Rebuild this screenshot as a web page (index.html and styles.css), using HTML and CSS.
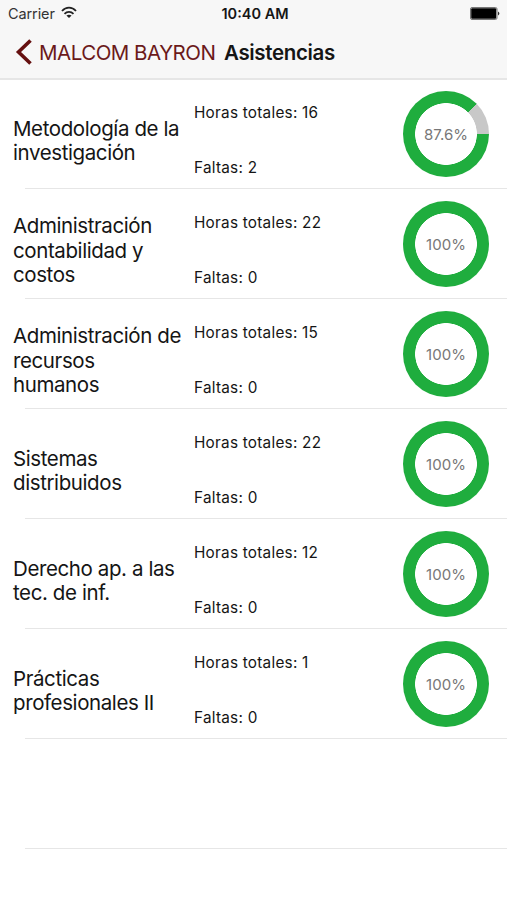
FILE: index.html
```html
<!DOCTYPE html>
<html lang="es">

<head>
    <meta charset="utf-8">
    <meta name="viewport" content="width=device-width">
    <title>Asistencias</title>
    <link rel="stylesheet" href="styles.css">
</head>

<body>
    <header class="header">
        <div class="status-bar">
            <div class="carrier">
                <span>Carrier</span>
                <svg class="wifi" width="16" height="14" viewBox="0 0 16 14">
                    <path d="M1 5C5 .6 11 .6 15 5M3.5 7.800C6 5.200 10 5.200 12.500 7.800" />
                    <path class="wifi-dot" d="M8 12L5.400 9.600C7 8.300 9 8.300 10.600 9.600Z" />
                </svg>
            </div>
            <span class="time">10:40 AM</span>
            <svg class="battery" width="31" height="13" viewBox="0 0 31 13">
                <rect class="battery-case" x=".5" y=".5" width="26.500" height="12" rx="1.500" />
                <rect x="1.200" y="1.200" width="25" height="10.600" rx="1" />
                <path d="M28.200 4.500Q30.500 6.500 28.200 8.500Z" />
            </svg>
        </div>
        <nav class="nav-bar">
            <a class="back">
                <svg width="18" height="26" viewBox="0 0 18 26">
                    <path d="M15.500 1.500L3.500 13L15.500 24.500" />
                </svg>
                <span class="back-text">MALCOM BAYRON</span>
            </a>
            <h1 class="title">Asistencias</h1>
        </nav>
    </header>
    <ul class="list">
        <li class="item">
            <h2 class="name"><span>Metodología de la<br>investigación</span></h2>
            <div class="info">
                <p>Horas totales: 16</p>
                <p>Faltas: 2</p>
            </div>
            <div class="chart partial"><span class="percent">87.6%</span></div>
        </li>
        <li class="item">
            <h2 class="name"><span>Administración<br>contabilidad y<br>costos</span></h2>
            <div class="info">
                <p>Horas totales: 22</p>
                <p>Faltas: 0</p>
            </div>
            <div class="chart"><span class="percent">100%</span></div>
        </li>
        <li class="item">
            <h2 class="name"><span>Administración de<br>recursos<br>humanos</span></h2>
            <div class="info">
                <p>Horas totales: 15</p>
                <p>Faltas: 0</p>
            </div>
            <div class="chart"><span class="percent">100%</span></div>
        </li>
        <li class="item">
            <h2 class="name"><span>Sistemas<br>distribuidos</span></h2>
            <div class="info">
                <p>Horas totales: 22</p>
                <p>Faltas: 0</p>
            </div>
            <div class="chart"><span class="percent">100%</span></div>
        </li>
        <li class="item">
            <h2 class="name"><span>Derecho ap. a las<br>tec. de inf.</span></h2>
            <div class="info">
                <p>Horas totales: 12</p>
                <p>Faltas: 0</p>
            </div>
            <div class="chart"><span class="percent">100%</span></div>
        </li>
        <li class="item">
            <h2 class="name"><span>Prácticas<br>profesionales II</span></h2>
            <div class="info">
                <p>Horas totales: 1</p>
                <p>Faltas: 0</p>
            </div>
            <div class="chart"><span class="percent">100%</span></div>
        </li>
        <li class="item"></li>
    </ul>
</body>

</html>
```
FILE: styles.css
```css
* {
    box-sizing: border-box;
}

body {
    margin: 0;
    height: 900px;
    overflow: hidden;
    background: #fff;
    color: #151515;
    font-family: Inter, "Liberation Sans", sans-serif;
}

h1,
h2,
p,
ul {
    margin: 0;
    padding: 0;
}

.header {
    height: 80px;
    background: #f7f7f7;
    border-bottom: 2px solid #e6e6e6;
}

.status-bar {
    display: grid;
    grid-template-columns: 1fr auto 1fr;
    align-items: center;
    height: 27px;
    padding: 0 6px 0 8px;
}

.carrier {
    display: flex;
    align-items: center;
    gap: 6px;
    font-size: 14.5px;
    letter-spacing: -.1px;
    color: #333;
}

.wifi {
    margin-bottom: 2px;
    fill: none;
    stroke: #222;
    stroke-width: 1.8;
}

.wifi .wifi-dot {
    fill: #222;
    stroke: none;
}

.time {
    padding-left: 1px;
    font-size: 14.5px;
    font-weight: 600;
}

.battery {
    justify-self: end;
    fill: #000;
}

.battery-case {
    fill: none;
    stroke: #777;
}

.nav-bar {
    display: flex;
    align-items: center;
    height: 50px;
    padding-left: 15px;
}

.back {
    display: flex;
    align-items: center;
    width: 209px;
    color: #6b1a1a;
    font-size: 20.5px;
    letter-spacing: -.5px;
    white-space: nowrap;
}

.back svg {
    margin-right: 6px;
    fill: none;
    stroke: #651010;
    stroke-width: 3.6;
}

.title {
    font-size: 20.5px;
    font-weight: 600;
    letter-spacing: -.35px;
}

.list {
    list-style: none;
}

/* the separator starts 25px from the left edge */
.item {
    display: flex;
    height: 110px;
    padding: 0 18px 0 13px;
    background: linear-gradient(#e6e6e6, #e6e6e6) 25px 108px / 100% 1px no-repeat;
}

.name {
    display: flex;
    align-items: center;
    width: 181px;
    padding-top: 12px;
    font-size: 20.5px;
    font-weight: 400;
    line-height: 24.5px;
    letter-spacing: -.4px;
    white-space: nowrap;
}

.info {
    display: flex;
    flex-direction: column;
    gap: 35px;
    padding-top: 23px;
    font-size: 15.3px;
    line-height: 20px;
    letter-spacing: .25px;
}

.chart {
    display: flex;
    align-items: center;
    justify-content: center;
    width: 86px;
    height: 86px;
    margin: 11px 0 0 auto;
    border-radius: 50%;
    background: radial-gradient(closest-side, #fff 71%, transparent 72.5%), #1fad3e;
}

.chart.partial {
    background: radial-gradient(closest-side, #fff 71%, transparent 72.5%), conic-gradient(from 45.4deg, #c8c8c8 44.6deg, #1fad3e 0);
}

.percent {
    color: #777;
    font-size: 15px;
}
```
